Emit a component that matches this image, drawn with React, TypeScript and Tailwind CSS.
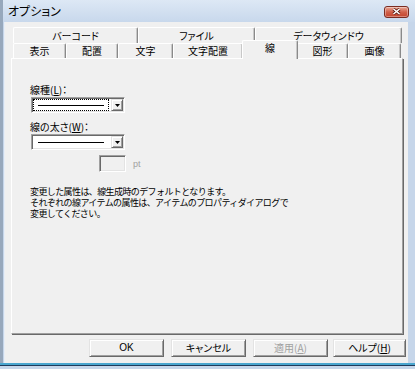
import React from "react";

const sunken =
  "border border-t-[#a0a0a0] border-l-[#a0a0a0] border-r-white border-b-white shadow-[inset_1px_1px_#696969,inset_-1px_-1px_#e3e3e3]";
const raised =
  "border border-t-[#e3e3e3] border-l-[#e3e3e3] border-r-[#696969] border-b-[#696969] shadow-[inset_1px_1px_#ffffff,inset_-1px_-1px_#a0a0a0]";

function Tab({
  label,
  w,
}: {
  label: string;
  w: string;
}) {
  return (
    <div
      className={`${w} h-full flex items-center justify-center border-t border-l border-white border-r border-r-[#8a8a8a] shadow-[inset_-1px_0_#c8c8c8] rounded-t-[2px]`}
    >
      {label}
    </div>
  );
}

function Combo({ focus = false }: { focus?: boolean }) {
  return (
    <div className={`w-[94px] h-[16px] bg-white flex items-stretch ml-[1px] ${sunken}`}>
      <div className="flex-1 p-[1px] pr-[2px]">
        <div
          className={`h-full flex items-center px-[4px] ${
            focus ? "border border-dotted border-black" : "border border-transparent"
          }`}
        >
          <div className="h-[1px] w-full bg-black" />
        </div>
      </div>
      <div
        className={`w-[12px] my-[1px] mr-[1px] bg-[#f0f0f0] flex items-center justify-center ${raised}`}
      >
        <svg width="5" height="3" viewBox="0 0 5 3">
          <path d="M0 0H5L2.5 3Z" fill="#000" />
        </svg>
      </div>
    </div>
  );
}

function Button({
  children,
  w = "w-[75px]",
  disabled = false,
}: {
  children: React.ReactNode;
  w?: string;
  disabled?: boolean;
}) {
  return (
    <div
      className={`${w} h-[18px] flex items-center justify-center bg-[#f0f0f0] ${raised} ${
        disabled ? "text-[#a0a0a0]" : "text-black"
      }`}
    >
      {children}
    </div>
  );
}

export default function App() {
  return (
    <div className="w-[415px] h-[369px] flex flex-col bg-[#c6d6ea] border-l-[3px] border-[#97a8bc] font-['Noto_Sans_CJK_JP',sans-serif] text-[10px] leading-[12px] text-black [font-feature-settings:'palt']">
      {/* title bar */}
      <div className="h-[22px] flex items-center justify-between pl-[5px] pr-[6px] bg-linear-to-b from-[#dde8f5] to-[#c8d8ec]">
        <span className="text-[12px] text-black">オプション</span>
        <div className="w-[25px] h-[12px] mt-[1px] rounded-[3px] border border-[#7a2c22] bg-linear-to-b from-[#e9a796] via-[#d0604a] to-[#c4432c] flex items-center justify-center shadow-[inset_0_0_0_1px_rgba(255,255,255,0.35)]">
          <svg width="9" height="7" viewBox="0 0 9 7">
            <path d="M1.5 1L7.5 6M7.5 1L1.5 6" stroke="#5a1a12" strokeWidth="3" />
            <path d="M1.5 1L7.5 6M7.5 1L1.5 6" stroke="#ffffff" strokeWidth="1.6" />
          </svg>
        </div>
      </div>

      {/* client area */}
      <div className="flex-1 ml-[1px] mr-[7px] bg-[#f0f0f0] border-l border-[#e8eef6] flex flex-col">
        {/* tab control */}
        <div className="mt-[5px] ml-[6px] w-[392px] flex flex-col">
          <div className="h-[16px] ml-[2px] flex">
            <Tab label="バーコード" w="w-[125px]" />
            <Tab label="ファイル" w="w-[117px]" />
            <Tab label="データウィンドウ" w="w-[147px]" />
          </div>
          <div className="h-[15px] ml-[2px] flex items-end">
            <Tab label="表示" w="w-[53px]" />
            <Tab label="配置" w="w-[52px]" />
            <Tab label="文字" w="w-[55px]" />
            <Tab label="文字配置" w="w-[70px]" />
            <div className="relative z-10 w-[56px] h-[19px] -mb-[1px] -mx-[1px] bg-[#f0f0f0] flex justify-center pt-[1px] border-t border-l border-white border-r border-r-[#8a8a8a] shadow-[inset_-1px_0_#c8c8c8] rounded-t-[2px]">
              線
            </div>
            <Tab label="図形" w="w-[51px]" />
            <Tab label="画像" w="w-[53px]" />
          </div>

          {/* panel */}
          <div className="h-[276px] border-t border-l border-white border-r border-b border-r-[#a0a0a0] border-b-[#a0a0a0] shadow-[1px_1px_#696969] pl-[18px] flex flex-col">
            <div className="mt-[25px]">
              線種(<span className="underline">L</span>)：
            </div>
            <div className="mt-[1px]">
              <Combo focus />
            </div>
            <div className="mt-[8px]">
              線の太さ(<span className="underline">W</span>)：
            </div>
            <div className="mt-[1px]">
              <Combo />
            </div>
            <div className="mt-[5px] ml-[69px] flex items-center gap-[7px]">
              <div className={`w-[27px] h-[17px] bg-[#f0f0f0] ${sunken}`} />
              <span className="text-[#a0a0a0] font-['Liberation_Sans',sans-serif] text-[9px]">pt</span>
            </div>
            <div className="mt-[14px] text-[9px] leading-[11px] tracking-[-0.6px] [font-feature-settings:normal]">
              <p>変更した属性は、線生成時のデフォルトとなります。</p>
              <p>それぞれの線アイテムの属性は、アイテムのプロパティダイアログで</p>
              <p>変更してください。</p>
            </div>
          </div>
        </div>

        {/* buttons */}
        <div className="mt-[5px] ml-[84px] flex">
          <Button>
            <span className="font-['Liberation_Sans',sans-serif]">OK</span>
          </Button>
          <div className="w-[7px]" />
          <Button>キャンセル</Button>
          <div className="w-[7px]" />
          <Button disabled>
            適用(<span className="underline">A</span>)
          </Button>
          <div className="w-[5px]" />
          <Button w="w-[73px]">
            ヘルプ(<span className="underline">H</span>)
          </Button>
        </div>
      </div>

      {/* bottom frame */}
      <div className="h-[6px] -ml-[3px] flex flex-col">
        <div className="h-[2px] bg-[#4aa6cf]" />
        <div className="h-[1px] bg-[#1f3b5c]" />
        <div className="flex-1 bg-[#c6d6ea]" />
      </div>
    </div>
  );
}
